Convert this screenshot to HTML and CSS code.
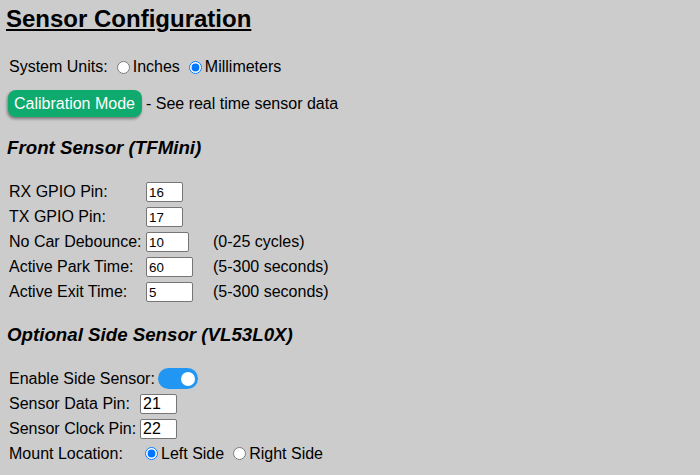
FILE: index.html
```html
<!DOCTYPE html>
<html lang="en">
<head>
<meta charset="utf-8">
<title>Sensor Configuration</title>
<link rel="stylesheet" href="styles.css">
</head>
<body>
<main class="page">
  <h1 class="title">Sensor Configuration</h1>

  <div class="units">
    <span class="units-label">System Units:</span>
    <label class="opt"><input type="radio" name="units" class="radio"><span>Inches</span></label>
    <label class="opt"><input type="radio" name="units" class="radio" checked><span>Millimeters</span></label>
  </div>

  <div class="calib">
    <button class="btn" type="button">Calibration Mode</button>
    <span class="calib-text">- See real time sensor data</span>
  </div>

  <h2 class="section">Front Sensor (TFMini)</h2>
  <div class="grid front">
    <span class="lbl">RX GPIO Pin:</span>
    <span class="cell"><input class="num small w37" type="text" value="16"></span>
    <span class="note"></span>

    <span class="lbl">TX GPIO Pin:</span>
    <span class="cell"><input class="num small w37" type="text" value="17"></span>
    <span class="note"></span>

    <span class="lbl">No Car Debounce:</span>
    <span class="cell"><input class="num small w43" type="text" value="10"></span>
    <span class="note">(0-25 cycles)</span>

    <span class="lbl">Active Park Time:</span>
    <span class="cell"><input class="num small w47" type="text" value="60"></span>
    <span class="note">(5-300 seconds)</span>

    <span class="lbl">Active Exit Time:</span>
    <span class="cell"><input class="num small w47" type="text" value="5"></span>
    <span class="note">(5-300 seconds)</span>
  </div>

  <h2 class="section section-two">Optional Side Sensor (VL53L0X)</h2>
  <div class="grid side">
    <div class="span-row">
      <span class="lbl">Enable Side Sensor:</span>
      <span class="toggle"><span class="knob"></span></span>
    </div>

    <span class="lbl">Sensor Data Pin:</span>
    <span class="cell"><input class="num big w37" type="text" value="21"></span>

    <span class="lbl">Sensor Clock Pin:</span>
    <span class="cell"><input class="num big w37" type="text" value="22"></span>

    <span class="lbl">Mount Location:</span>
    <span class="cell radios">
      <label class="opt first"><input type="radio" name="mount" class="radio" checked><span>Left Side</span></label>
      <label class="opt"><input type="radio" name="mount" class="radio"><span>Right Side</span></label>
    </span>
  </div>
</main>
</body>
</html>
```

FILE: styles.css
```css
html, body {
  margin: 0;
  padding: 0;
  background: #cccccc;
}

body {
  font-family: "Liberation Sans", Arial, sans-serif;
  font-size: 16px;
  color: #000;
}

.page {
  padding: 5px 7px 0 7px;
}

.title {
  margin: 0 0 0 -1px;
  font-size: 24px;
  line-height: 28px;
  font-weight: bold;
  text-decoration: underline;
}

.units {
  margin-top: 24px;
  padding-left: 2px;
  height: 20px;
  line-height: 20px;
  display: flex;
  align-items: center;
}

.opt {
  display: inline-flex;
  align-items: center;
}

.radio {
  width: 13px;
  height: 13px;
  margin: 0 3px 0 9px;
}

.calib {
  margin-top: 13px;
  padding-left: 1px;
  display: flex;
  align-items: center;
  height: 27px;
}

.btn {
  font-family: "Liberation Sans", Arial, sans-serif;
  font-size: 16px;
  line-height: 18px;
  height: 27px;
  padding: 0 7px 0 6px;
  border: none;
  border-radius: 8px;
  background: #0faa6d;
  color: #fff;
  box-shadow: -1px 2px 3px rgba(0, 0, 0, 0.4);
}

.calib-text {
  margin-left: 4px;
  line-height: 18px;
}

.section {
  margin: 20px 0 0 0;
  font-size: 18.72px;
  line-height: 22px;
  font-weight: bold;
  font-style: italic;
}

.section-two {
  margin-top: 19px;
}

.grid {
  display: grid;
  grid-auto-rows: 25px;
  align-items: center;
  padding-left: 2px;
}

.front {
  margin-top: 20.5px;
  grid-template-columns: 137px 67px auto;
}

.side {
  margin-top: 20.5px;
  grid-template-columns: 131px auto;
}

.lbl, .note {
  white-space: nowrap;
}

.cell {
  display: flex;
  align-items: center;
}

.num {
  box-sizing: border-box;
  height: 20px;
  margin: 0;
  padding: 0 2px;
  border: 1px solid #767676;
  border-radius: 2px;
  background: #fff;
  color: #000;
  font-family: "Liberation Sans", Arial, sans-serif;
}

.small { font-size: 13.33px; }
.big { font-size: 16px; }

.w37 { width: 37px; }
.w43 { width: 43px; }
.w47 { width: 47px; }

.span-row {
  grid-column: 1 / -1;
  display: flex;
  align-items: center;
}

.toggle {
  position: relative;
  display: inline-block;
  width: 40px;
  height: 21px;
  margin-left: 3px;
  border-radius: 11px;
  background: #2196f3;
}

.knob {
  position: absolute;
  top: 3.5px;
  right: 3px;
  width: 14px;
  height: 14px;
  border-radius: 50%;
  background: #fff;
}

.radios .radio {
  margin: 0 3px 0 9px;
}

.radios .first .radio {
  margin-left: 5px;
}
```
